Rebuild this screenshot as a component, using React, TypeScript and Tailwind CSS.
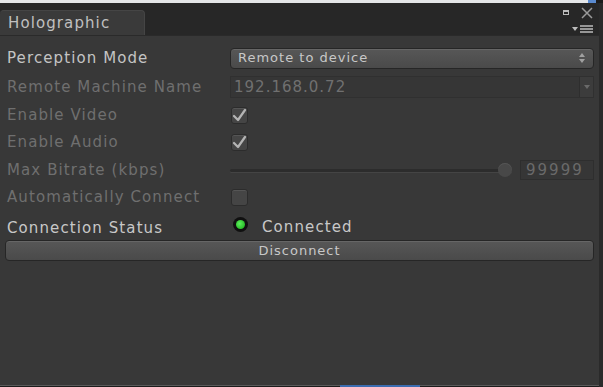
import React from 'react';

const FONT = { fontFamily: '"DejaVu Sans", "Noto Sans", sans-serif' };

function Check({ checked }: { checked?: boolean }) {
  return (
    <div className="flex h-[17px] w-[17px] items-center justify-center rounded-[3px] border border-[#2c2c2c] bg-[#454545] shadow-[inset_0_1px_0_#555]">
      {checked && (
        <svg width="15" height="13" viewBox="0 0 15 13">
          <path d="M2 7 L6 11 L13 1" fill="none" stroke="#b4b4b4" strokeWidth="2.2" strokeLinecap="round" strokeLinejoin="round" />
        </svg>
      )}
    </div>
  );
}

function Row({ label, dim, h, children }: { label: string; dim?: boolean; h: string; children?: React.ReactNode }) {
  return (
    <div className={`flex items-center ${h}`}>
      <div
        className={`w-[230px] pl-[7px] text-[15px] tracking-[1.1px] ${dim ? 'text-[#6f6f6f]' : 'text-[#c4c4c4]'}`}
      >
        {label}
      </div>
      <div className="flex flex-1 items-center pr-[5px]">{children}</div>
    </div>
  );
}

export default function App() {
  return (
    <div className="relative h-[387px] w-[603px] overflow-hidden bg-[#1c1c1c]" style={FONT}>
      <div className="flex h-[3px] w-[596px]">
        <div className="flex-1 bg-[#e4e6e8]" />
        <div className="w-[8px] bg-[#5b8bd0]" />
      </div>
      <div className="flex h-[383px] w-[599px] flex-col">
        <div className="relative flex h-[32px] items-end bg-[#272727]">
          <div className="flex h-[25px] w-[145px] items-center rounded-t-[4px] border-t border-r border-[#454545] bg-[#3a3a3a] pl-[8px] pt-[1px] text-[15px] tracking-[1.1px] text-[#c0c0c0]">
            Holographic
          </div>
          <div className="absolute right-[30px] top-[7px] h-[5px] w-[6px] border border-t-2 border-[#bcbcbc]" />
          <svg className="absolute right-[5px] top-[3px]" width="14" height="14" viewBox="0 0 14 14">
            <path d="M2 2 L12 12 M12 2 L2 12" stroke="#9a9a9a" strokeWidth="1.5" />
          </svg>
          <svg className="absolute right-[5px] top-[22px]" width="22" height="8" viewBox="0 0 22 8">
            <path d="M0 2 L6 2 L3 6 Z" fill="#bcbcbc" />
            <path d="M8 1 H21 M8 4 H21 M8 7 H21" stroke="#bcbcbc" strokeWidth="1.3" />
          </svg>
        </div>
        <div className="flex flex-1 flex-col border-t border-[#2a2a2a] bg-[#383838] pt-[7px]">
          <Row label="Perception Mode" h="h-[30px]">
            <div className="flex h-[21px] flex-1 items-center justify-between rounded-[4px] border border-[#262626] bg-gradient-to-b from-[#575757] to-[#4a4a4a] pl-[7px] pr-[8px] text-[13px] tracking-[1px] text-[#c8c8c8] shadow-[inset_0_1px_0_#666]">
              <span>Remote to device</span>
              <svg width="6" height="10" viewBox="0 0 6 10">
                <path d="M0 4 L3 0 L6 4 Z M0 6 L3 10 L6 6 Z" fill="#a0a0a0" />
              </svg>
            </div>
          </Row>
          <Row label="Remote Machine Name" dim h="h-[28px]">
            <div className="flex h-[22px] flex-1 items-center border border-[#303030] bg-[#363636]">
              <div className="flex-1 pl-[3px] text-[15px] tracking-[1px] text-[#707070]">192.168.0.72</div>
              <div className="flex h-full w-[14px] items-center justify-center border-l border-[#2e2e2e] bg-[#3c3c3c]">
                <svg width="6" height="4" viewBox="0 0 6 4">
                  <path d="M0 0 L6 0 L3 4 Z" fill="#6a6a6a" />
                </svg>
              </div>
            </div>
          </Row>
          <Row label="Enable Video" dim h="h-[28px]">
            <div className="pl-[1px]"><Check checked /></div>
          </Row>
          <Row label="Enable Audio" dim h="h-[27px]">
            <div className="pl-[1px]"><Check checked /></div>
          </Row>
          <Row label="Max Bitrate (kbps)" dim h="h-[28px]">
            <div className="flex h-[20px] flex-1 items-center">
              <div className="h-[3px] flex-1 rounded-full bg-[#2c2c2c] shadow-[0_1px_0_#444]" />
              <div className="-ml-[8px] h-[14px] w-[14px] rounded-full bg-[#484848] shadow-[inset_0_1px_0_#555]" />
              <div className="ml-[8px] flex h-[20px] w-[74px] items-center border border-[#2e2e2e] bg-[#363636] pl-[5px] text-[15px] tracking-[2px] text-[#6a6a6a]">
                99999
              </div>
            </div>
          </Row>
          <Row label="Automatically Connect" dim h="h-[27px]">
            <div className="pl-[1px]"><Check /></div>
          </Row>
          <div className="flex h-[29px] items-center">
            <div className="w-[230px] pl-[7px] pt-[5px] text-[15px] tracking-[1.1px] text-[#c8c8c8]">Connection Status</div>
            <div className="flex items-center pb-[2px]">
              <div className="ml-[3px] flex h-[15px] w-[15px] items-center justify-center rounded-full bg-[#101010]">
                <div className="h-[9px] w-[9px] rounded-full bg-[radial-gradient(circle_at_40%_40%,#5cf05c,#14a814)]" />
              </div>
              <span className="ml-[14px] mt-[5px] text-[15px] tracking-[1.1px] text-[#c8c8c8]">Connected</span>
            </div>
          </div>
          <div className="px-[5px]">
            <div className="flex h-[21px] items-center justify-center rounded-[4px] border border-[#262626] bg-gradient-to-b from-[#575757] to-[#4a4a4a] text-[13px] tracking-[1px] text-[#c8c8c8] shadow-[inset_0_1px_0_#666]">
              Disconnect
            </div>
          </div>
        </div>
        <div className="h-[1px] bg-[#5a5a5a]" />
      </div>
      <div className="absolute right-0 top-[3px] h-[384px] w-[4px] bg-[#2a2a2a]" />
      <div className="absolute bottom-0 left-[340px] h-[2px] w-[80px] bg-[#3b6cb0]" />
    </div>
  );
}
